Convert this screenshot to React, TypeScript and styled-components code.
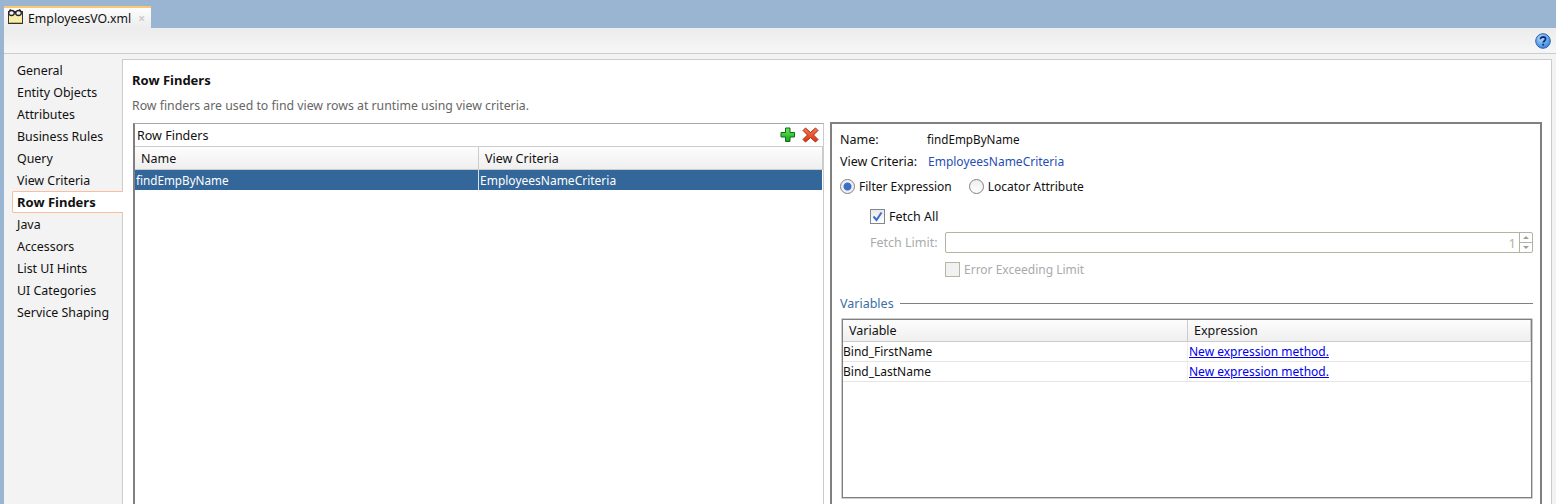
import React from "react";
import styled, { createGlobalStyle } from "styled-components";

const GlobalStyle = createGlobalStyle`
  html, body {
    margin: 0;
    padding: 0;
    background: #ffffff;
  }
  body {
    font-family: "Noto Sans", "Open Sans", sans-serif;
    font-size: 12px;
    color: #111111;
    overflow: hidden;
  }
  * {
    box-sizing: border-box;
  }
`;

const NAV_ITEMS = [
  "General",
  "Entity Objects",
  "Attributes",
  "Business Rules",
  "Query",
  "View Criteria",
  "Row Finders",
  "Java",
  "Accessors",
  "List UI Hints",
  "UI Categories",
  "Service Shaping",
];

const VARIABLES = ["Bind_FirstName", "Bind_LastName"];

const FileIcon = () => (
  <svg width="16" height="18" viewBox="0 0 16 18">
    <rect x="0.5" y="2.5" width="14" height="12" fill="#f6eeaa" stroke="#333" />
    <path d="M1.5 13.5h12" stroke="#c9b95e" />
    <ellipse cx="3.5" cy="4" rx="2.8" ry="2.5" fill="#eef3f6" stroke="#222" strokeWidth="1.3" />
    <ellipse cx="10.5" cy="4" rx="2.8" ry="2.5" fill="#eef3f6" stroke="#222" strokeWidth="1.3" />
    <path d="M6 3.5h2M1 1.500l2-1M13 1.500l-2-1" stroke="#222" />
  </svg>
);

const AddIcon = () => (
  <svg width="16" height="16" viewBox="0 0 16 16">
    <defs>
      <linearGradient id="addFill" x1="0" y1="0" x2="0" y2="1">
        <stop offset="0%" stopColor="#6fe45a" />
        <stop offset="100%" stopColor="#12a81e" />
      </linearGradient>
    </defs>
    <path
      d="M5.5 1h4.500v4.500h4.500v4.500h-4.500v4.500h-4.500v-4.500h-4.500v-4.500h4.500z"
      fill="url(#addFill)"
      stroke="#0b6e14"
      strokeLinejoin="round"
    />
  </svg>
);

const RemoveIcon = () => (
  <svg width="17" height="16" viewBox="0 0 17 16">
    <defs>
      <linearGradient id="removeFill" x1="0" y1="0" x2="0" y2="1">
        <stop offset="0%" stopColor="#f47a50" />
        <stop offset="100%" stopColor="#dd3412" />
      </linearGradient>
    </defs>
    <path
      d="M3.5 1l5 4.500l5-4.500l2.500 2.500l-4.500 4.500l4.500 4.500l-2.500 2.500l-5-4.500l-5 4.500l-2.500-2.500l4.500-4.500l-4.500-4.500z"
      fill="url(#removeFill)"
      stroke="#a52a10"
      strokeLinejoin="round"
    />
  </svg>
);

const HelpIcon = () => (
  <svg width="16" height="16" viewBox="0 0 16 16">
    <defs>
      <radialGradient id="helpFill" cx="40%" cy="30%" r="75%">
        <stop offset="0%" stopColor="#b9dcfb" />
        <stop offset="100%" stopColor="#2f7fdc" />
      </radialGradient>
    </defs>
    <circle cx="8" cy="8" r="7.3" fill="url(#helpFill)" stroke="#2a62b0" />
    <path
      d="M5.500 6.200c0-1.500 1.200-2.200 2.600-2.200s2.500.8 2.500 2.100c0 1.800-2.300 1.800-2.300 3.400"
      fill="none"
      stroke="#0d2f80"
      strokeWidth="1.8"
    />
    <rect x="7.3" y="10.700" width="1.800" height="1.800" fill="#0d2f80" />
  </svg>
);

const CheckMark = () => (
  <svg width="11" height="11" viewBox="0 0 11 11">
    <path d="M1.5 5.500l3 3.500l5-7.500" fill="none" stroke="#3f6fc8" strokeWidth="2" />
  </svg>
);

const Page = styled.div`
  width: 1556px;
  height: 504px;
  display: flex;
  flex-direction: column;
  overflow: hidden;
  background: #9ab5d2;
`;

const TabStrip = styled.div`
  height: 28px;
  flex: none;
  padding: 6px 0 0 4px;
  display: flex;
`;

const Tab = styled.div`
  width: 147px;
  height: 22px;
  display: flex;
  align-items: center;
  gap: 4px;
  padding: 0 0 0 4px;
  border-top: 2px solid #fbc772;
  background: linear-gradient(#fdfdfd, #ececec);
  font-size: 12.3px;
`;

const TabClose = styled.span`
  font-size: 12px;
  font-weight: 700;
  color: #cccccc;
  margin-left: 3px;
`;

const Workspace = styled.div`
  flex: 1;
  min-height: 0;
  margin-left: 4px;
  display: flex;
  flex-direction: column;
  background: #ffffff;
`;

const Toolbar = styled.div`
  height: 26px;
  flex: none;
  display: flex;
  align-items: center;
  justify-content: flex-end;
  padding: 0 5px 0 0;
  background: linear-gradient(#ececec, #f6f6f6);
  border-bottom: 1px solid #cccccc;
`;

const Body = styled.div`
  flex: 1;
  min-height: 0;
  display: flex;
`;

const Sidebar = styled.nav`
  width: 118px;
  flex: none;
  padding: 5px 0 0 8px;
  background: #f3f3f3;
  display: flex;
  flex-direction: column;
`;

const NavItem = styled.div<{ $active?: boolean }>`
  height: 22px;
  display: flex;
  align-items: center;
  padding-left: 4px;
  font-size: ${({ $active }) => ($active ? "13px" : "12.4px")};
  font-weight: ${({ $active }) => ($active ? 700 : 400)};
  background: ${({ $active }) => ($active ? "#ffffff" : "transparent")};
  border: ${({ $active }) => ($active ? "1px solid #fdbd9a" : "1px solid transparent")};
  border-right: 0;
  border-radius: 2px 0 0 2px;
  margin-right: ${({ $active }) => ($active ? "-1px" : "0")};
  position: relative;
`;

const Content = styled.div`
  flex: 1;
  min-width: 0;
  display: flex;
  padding: 5px 0 0 0;
  background: #f3f3f3;
`;

const Panel = styled.main`
  flex: 1;
  min-width: 0;
  margin-right: 4px;
  display: flex;
  flex-direction: column;
  padding: 12px 9px 0 10px;
  background: #ffffff;
  border: 1px solid #cccccc;
  border-bottom: 0;
`;

const Heading = styled.h1`
  margin: 0 0 0 -1px;
  height: 16px;
  line-height: 16px;
  font-size: 13px;
  font-weight: 700;
  color: #111111;
`;

const Description = styled.p`
  margin: 10px 0 0 -1px;
  height: 16px;
  line-height: 16px;
  font-size: 12.3px;
  color: #666666;
`;

const Columns = styled.div`
  flex: 1;
  min-height: 0;
  display: flex;
  gap: 6px;
  margin-top: 8px;
`;

const FinderBox = styled.section`
  width: 691px;
  flex: none;
  margin-top: 1px;
  display: flex;
  flex-direction: column;
  border-top: 1px solid #a8a8a8;
  border-left: 2px solid #808080;
  border-right: 1px solid #cccccc;
`;

const BoxTitle = styled.div`
  height: 23px;
  flex: none;
  display: flex;
  align-items: center;
  justify-content: space-between;
  padding: 0 4px 0 2px;
  font-size: 12.5px;
  border-bottom: 1px solid #cccccc;
`;

const BoxActions = styled.div`
  display: flex;
  align-items: center;
  gap: 6px;
`;

const GridHead = styled.div<{ $columns: string; $height: number }>`
  height: ${({ $height }) => $height}px;
  flex: none;
  display: grid;
  grid-template-columns: ${({ $columns }) => $columns};
  background: linear-gradient(#fdfdfd, #efefef);
  border-bottom: 1px solid #cccccc;
`;

const HeadCell = styled.div`
  display: flex;
  align-items: center;
  padding-left: 6px;
  font-size: 12.5px;
  border-right: 1px solid #cccccc;
`;

const SelectedRow = styled.div<{ $columns: string }>`
  height: 20px;
  margin-right: 1px;
  display: grid;
  grid-template-columns: ${({ $columns }) => $columns};
  background: #336699;
  color: #ffffff;
  font-size: 12px;
  align-items: stretch;
`;

const SelectedCell = styled.div`
  display: flex;
  align-items: center;
  padding-left: 1px;
  border-right: 1px solid #d8e2ec;

  &:last-child {
    border-right: 0;
  }
`;

const CompactName = styled.span`
  font-size: 11.7px;
`;

const DetailBox = styled.section`
  flex: 1;
  min-width: 0;
  display: flex;
  flex-direction: column;
  padding: 4px 7px 0 8px;
  border: 2px solid #808080;
  border-bottom: 0;
  font-size: 12.5px;
`;

const InfoRow = styled.div`
  height: 22px;
  flex: none;
  display: flex;
  align-items: center;
`;

const InfoLabel = styled.span`
  width: 87px;
`;

const LinkValue = styled.span`
  margin-left: 1px;
  font-size: 12px;
  color: #1f4fb5;
`;

const RadioRow = styled.div`
  height: 28px;
  flex: none;
  display: flex;
  align-items: center;
  gap: 17px;
  font-size: 12px;
`;

const RadioOption = styled.label`
  display: flex;
  align-items: center;
  gap: 4px;
`;

const RadioDot = styled.span<{ $checked?: boolean }>`
  width: 15px;
  height: 15px;
  border-radius: 50%;
  border: 1px solid #808080;
  background: ${({ $checked }) =>
    $checked
      ? "radial-gradient(circle, #3a6fc4 0 3.5px, #eef0f5 4.5px)"
      : "linear-gradient(#eeeeee, #ffffff)"};
`;

const FetchAllRow = styled.div`
  height: 22px;
  margin-top: 5px;
  padding-left: 30px;
  flex: none;
  display: flex;
  align-items: center;
  gap: 4px;
`;

const CheckBox = styled.span<{ $disabled?: boolean }>`
  width: 15px;
  height: 15px;
  flex: none;
  display: flex;
  align-items: center;
  justify-content: center;
  border: 1px solid ${({ $disabled }) => ($disabled ? "#b5b5a8" : "#7f8792")};
  background: ${({ $disabled }) => ($disabled ? "#f1f1f1" : "linear-gradient(#e8e8e8, #ffffff)")};
`;

const LimitRow = styled.div`
  height: 21px;
  margin-top: 5px;
  padding-left: 30px;
  flex: none;
  display: flex;
  align-items: center;
  color: #aaaaaa;
`;

const LimitLabel = styled.span`
  width: 75px;
  flex: none;
`;

const LimitField = styled.div`
  flex: 1;
  height: 21px;
  display: flex;
  justify-content: flex-end;
  align-items: center;
  border: 1px solid #b3b3a0;
  border-radius: 2px;
  color: #b3b3a0;
`;

const LimitValue = styled.span`
  padding-right: 3px;
  font-size: 13px;
`;

const SpinBox = styled.div`
  width: 13px;
  height: 100%;
  display: flex;
  flex-direction: column;
  border-left: 1px solid #b3b3a0;
`;

const SpinHalf = styled.div<{ $down?: boolean }>`
  flex: 1;
  display: flex;
  align-items: center;
  justify-content: center;
  border-top: ${({ $down }) => ($down ? "1px solid #b3b3a0" : "0")};

  &::before {
    content: "";
    border-left: 3px solid transparent;
    border-right: 3px solid transparent;
    ${({ $down }) =>
      $down ? "border-top: 3px solid #a0a090;" : "border-bottom: 3px solid #a0a090;"}
  }
`;

const ErrorRow = styled.div`
  height: 22px;
  margin-top: 5px;
  padding-left: 105px;
  flex: none;
  display: flex;
  align-items: center;
  gap: 4px;
  font-size: 12px;
  color: #aaaaaa;
`;

const SectionRow = styled.div`
  height: 16px;
  margin-top: 15px;
  flex: none;
  display: flex;
  align-items: center;
  gap: 6px;
  color: #3a6ea5;
`;

const SectionRule = styled.div`
  flex: 1;
  height: 1px;
  background: #808080;
`;

const VariableFrame = styled.div`
  margin: 7px 0 0 1px;
  flex: none;
  height: 181px;
  border: 1px solid #cccccc;
  border-radius: 1px;
`;

const VariableTable = styled.div`
  height: 100%;
  border: 1px solid #808080;
`;

const VariableRow = styled.div<{ $columns: string }>`
  height: 20px;
  display: grid;
  grid-template-columns: ${({ $columns }) => $columns};
  align-items: stretch;
  border-bottom: 1px solid #e6e6e6;
  font-size: 12px;
`;

const VariableCell = styled.div`
  display: flex;
  align-items: center;
  border-right: 1px solid #eeeeee;
`;

const MethodLink = styled.a`
  padding-left: 1px;
  color: #0000ee;
  text-decoration: underline;
`;

const FINDER_COLUMNS = "344px 1fr";
const VARIABLE_COLUMNS = "345px 1fr";

export default function App() {
  return (
    <>
      <GlobalStyle />
      <Page>
        <TabStrip>
          <Tab>
            <FileIcon />
            EmployeesVO.xml
            <TabClose>×</TabClose>
          </Tab>
        </TabStrip>
        <Workspace>
          <Toolbar>
            <HelpIcon />
          </Toolbar>
          <Body>
            <Sidebar>
              {NAV_ITEMS.map((item) => (
                <NavItem key={item} $active={item === "Row Finders"}>
                  {item}
                </NavItem>
              ))}
            </Sidebar>
            <Content>
              <Panel>
                <Heading>Row Finders</Heading>
                <Description>
                  Row finders are used to find view rows at runtime using view criteria.
                </Description>
                <Columns>
                  <FinderBox>
                    <BoxTitle>
                      Row Finders
                      <BoxActions>
                        <AddIcon />
                        <RemoveIcon />
                      </BoxActions>
                    </BoxTitle>
                    <GridHead $columns={FINDER_COLUMNS} $height={23}>
                      <HeadCell>Name</HeadCell>
                      <HeadCell>View Criteria</HeadCell>
                    </GridHead>
                    <SelectedRow $columns={FINDER_COLUMNS}>
                      <SelectedCell>
                        <CompactName>findEmpByName</CompactName>
                      </SelectedCell>
                      <SelectedCell>EmployeesNameCriteria</SelectedCell>
                    </SelectedRow>
                  </FinderBox>
                  <DetailBox>
                    <InfoRow>
                      <InfoLabel>Name:</InfoLabel>
                      <CompactName>findEmpByName</CompactName>
                    </InfoRow>
                    <InfoRow>
                      <InfoLabel>View Criteria:</InfoLabel>
                      <LinkValue>EmployeesNameCriteria</LinkValue>
                    </InfoRow>
                    <RadioRow>
                      <RadioOption>
                        <RadioDot $checked />
                        Filter Expression
                      </RadioOption>
                      <RadioOption>
                        <RadioDot />
                        Locator Attribute
                      </RadioOption>
                    </RadioRow>
                    <FetchAllRow>
                      <CheckBox>
                        <CheckMark />
                      </CheckBox>
                      Fetch All
                    </FetchAllRow>
                    <LimitRow>
                      <LimitLabel>Fetch Limit:</LimitLabel>
                      <LimitField>
                        <LimitValue>1</LimitValue>
                        <SpinBox>
                          <SpinHalf />
                          <SpinHalf $down />
                        </SpinBox>
                      </LimitField>
                    </LimitRow>
                    <ErrorRow>
                      <CheckBox $disabled />
                      Error Exceeding Limit
                    </ErrorRow>
                    <SectionRow>
                      Variables
                      <SectionRule />
                    </SectionRow>
                    <VariableFrame>
                      <VariableTable>
                        <GridHead $columns={VARIABLE_COLUMNS} $height={22}>
                          <HeadCell>Variable</HeadCell>
                          <HeadCell>Expression</HeadCell>
                        </GridHead>
                        {VARIABLES.map((name) => (
                          <VariableRow key={name} $columns={VARIABLE_COLUMNS}>
                            <VariableCell>{name}</VariableCell>
                            <VariableCell>
                              <MethodLink>New expression method.</MethodLink>
                            </VariableCell>
                          </VariableRow>
                        ))}
                      </VariableTable>
                    </VariableFrame>
                  </DetailBox>
                </Columns>
              </Panel>
            </Content>
          </Body>
        </Workspace>
      </Page>
    </>
  );
}
